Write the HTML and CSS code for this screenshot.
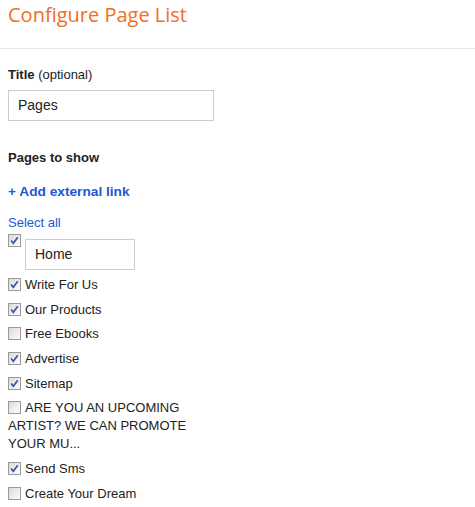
FILE: index.html
```html
<!DOCTYPE html>
<html>
<head>
<meta charset="utf-8">
<link rel="stylesheet" href="styles.css">
</head>
<body>
<div class="header"><h1>Configure Page List</h1></div>
<div class="content">
  <div class="field-label"><b>Title</b> <span class="opt">(optional)</span></div>
  <div class="textbox title-box">Pages</div>
  <div class="section-label">Pages to show</div>
  <div class="add-link">+ Add external link</div>
  <div class="select-all">Select all</div>
  <div class="home-row">
    <span class="cb checked"><svg viewBox="0 0 13 13" width="13" height="13"><path d="M3.2 6.6 L5.3 9.3 L9.8 3.2" fill="none" stroke="#3b55a6" stroke-width="1.7"/></svg></span>
    <div class="textbox home-box">Home</div>
  </div>
  <ul class="pages">
    <li><span class="cb checked"><svg viewBox="0 0 13 13" width="13" height="13"><path d="M3.2 6.6 L5.3 9.3 L9.8 3.2" fill="none" stroke="#3b55a6" stroke-width="1.7"/></svg></span>Write For Us</li>
    <li><span class="cb checked"><svg viewBox="0 0 13 13" width="13" height="13"><path d="M3.2 6.6 L5.3 9.3 L9.8 3.2" fill="none" stroke="#3b55a6" stroke-width="1.7"/></svg></span>Our Products</li>
    <li><span class="cb"></span>Free Ebooks</li>
    <li><span class="cb checked"><svg viewBox="0 0 13 13" width="13" height="13"><path d="M3.2 6.6 L5.3 9.3 L9.8 3.2" fill="none" stroke="#3b55a6" stroke-width="1.7"/></svg></span>Advertise</li>
    <li><span class="cb checked"><svg viewBox="0 0 13 13" width="13" height="13"><path d="M3.2 6.6 L5.3 9.3 L9.8 3.2" fill="none" stroke="#3b55a6" stroke-width="1.7"/></svg></span>Sitemap</li>
    <li class="long"><span class="cb"></span>ARE YOU AN UPCOMING ARTIST? WE CAN PROMOTE YOUR MU...</li>
    <li><span class="cb checked"><svg viewBox="0 0 13 13" width="13" height="13"><path d="M3.2 6.6 L5.3 9.3 L9.8 3.2" fill="none" stroke="#3b55a6" stroke-width="1.7"/></svg></span>Send Sms</li>
    <li><span class="cb"></span>Create Your Dream</li>
  </ul>
</div>
</body>
</html>
```
FILE: styles.css
```css
html, body {
  margin: 0;
  padding: 0;
  background: #fff;
}
body {
  font-family: "Liberation Sans", Arial, sans-serif;
  font-size: 13px;
  color: #222;
}
.header {
  height: 48px;
  border-bottom: 1px solid #e5e5e5;
  padding: 0 8px;
}
.header h1 {
  margin: 0;
  padding-top: 1px;
  font-family: "Open Sans", sans-serif;
  font-weight: normal;
  font-size: 20px;
  line-height: 28px;
  color: #f36d23;
}
.content {
  padding: 0 8px;
}
.field-label {
  margin-top: 18px;
  line-height: 16px;
}
.field-label b {
  font-size: 13px;
}
.field-label .opt {
  font-size: 13px;
}
.textbox {
  box-sizing: border-box;
  border: 1px solid #ccc;
  padding: 0 9px;
  line-height: 29px;
  height: 31px;
  font-size: 14px;
  color: #222;
}
.title-box {
  margin-top: 7px;
  width: 206px;
}
.section-label {
  margin-top: 29px;
  font-weight: bold;
  line-height: 16px;
}
.add-link {
  margin-top: 18px;
  font-weight: bold;
  font-size: 13.7px;
  color: #2158d6;
  line-height: 16px;
}
.select-all {
  margin-top: 15px;
  color: #2158d6;
  line-height: 16px;
}
.home-row {
  display: flex;
  align-items: flex-start;
  gap: 4px;
  margin-top: 3px;
}
.home-row .cb {
  margin-right: 0;
}
.home-box {
  margin-top: 5px;
  width: 110px;
  height: 31px;
}
.cb {
  box-sizing: border-box;
  display: inline-block;
  width: 13px;
  height: 13px;
  border: 1px solid #9a9a9a;
  background: linear-gradient(135deg, #d8d8d8 0%, #efefef 55%, #fcfcfc 100%);
  vertical-align: -2px;
  margin-right: 4px;
  position: relative;
  flex-shrink: 0;
}
.cb svg {
  position: absolute;
  left: -1px;
  top: -1px;
}
.pages {
  list-style: none;
  margin: 6px 0 0;
  padding: 0;
}
.pages li {
  line-height: 18px;
  margin-bottom: 6.7px;
}
.pages li.long {
  width: 190px;
}
```
